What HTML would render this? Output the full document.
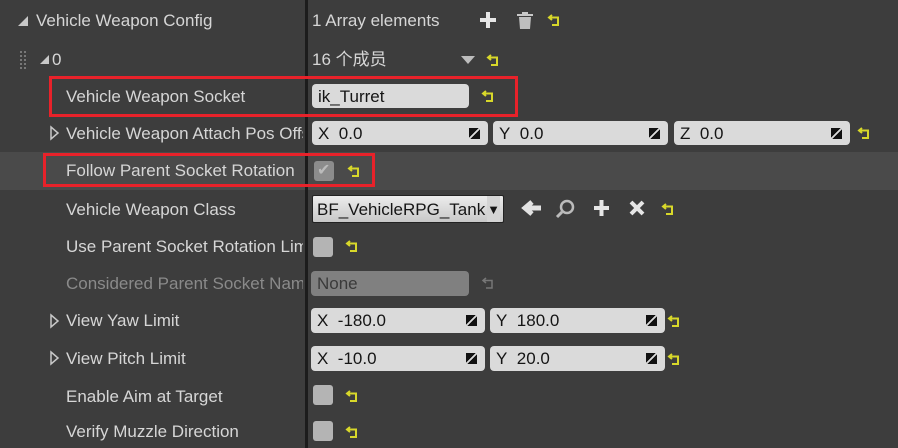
<!DOCTYPE html><html><head><style>
body{margin:0;width:898px;height:448px;background:#3d3d3d;font-family:"Liberation Sans","Noto Sans CJK SC",sans-serif;font-size:17px;color:#d6d6d6;position:relative;overflow:hidden}
.a{position:absolute;white-space:nowrap}
.t{line-height:20px}
.f{position:absolute;background:#dadada;border-radius:4px;color:#151515;line-height:25px;height:24px;box-sizing:border-box;padding-left:6px}
.cb{position:absolute;width:20px;height:20px;background:#b4b4b4;border-radius:3px}
.sp{position:absolute;right:8px;top:7px;width:11px;height:11px;background:linear-gradient(135deg,#111 0 45%,transparent 45% 55%,#111 55%)}
.box{position:absolute;border:3px solid #e8222a;box-sizing:border-box}
</style></head><body>
<div class="a" style="left:0;top:152px;width:898px;height:38px;background:#4a4a4a"></div>
<div class="a" style="left:305px;top:0;width:3px;height:448px;background:#1c1c1c"></div>
<svg class="a" style="left:0;top:0" width="898" height="448">
<defs><g id="rs"><path d="M4 1 L1 3.5 L4 6 M1 3.5 H10 V11 H4" fill="none" stroke="#d8d82a" stroke-width="2"/></g></defs>
<polygon points="18,26 28,16 28,26" fill="#c8c8c8"/>
<polygon points="40,64 49,55 49,64" fill="#c8c8c8"/>
<g fill="#777"><rect x="20" y="51" width="2" height="2"/><rect x="24" y="51" width="2" height="2"/><rect x="20" y="55" width="2" height="2"/><rect x="24" y="55" width="2" height="2"/><rect x="20" y="59" width="2" height="2"/><rect x="24" y="59" width="2" height="2"/><rect x="20" y="63" width="2" height="2"/><rect x="24" y="63" width="2" height="2"/><rect x="20" y="67" width="2" height="2"/><rect x="24" y="67" width="2" height="2"/></g>
<polygon points="51,127 58,133 51,139" fill="none" stroke="#c8c8c8" stroke-width="1.5"/>
<polygon points="51,315 58,321 51,327" fill="none" stroke="#c8c8c8" stroke-width="1.5"/>
<polygon points="51,352 58,358 51,364" fill="none" stroke="#c8c8c8" stroke-width="1.5"/>
<path d="M480 20 H496 M488 12 V28" stroke="#e6e6e6" stroke-width="4"/>
<path d="M517 15 H533 M522 13 H528" stroke="#c8c8c8" stroke-width="2"/><path d="M519 17 H531 L530 29 H520 Z" fill="#bfbfbf"/>
<polygon points="461,56 475,56 468,64" fill="#bdbdbd"/>
<path d="M541 208 L526 208 M532 202 L525 208 L532 214" stroke="#e2e2e2" stroke-width="5" fill="none"/>
<circle cx="567" cy="207" r="6" fill="none" stroke="#bbb" stroke-width="2.5"/><path d="M562 212 L557 217" stroke="#bbb" stroke-width="3"/>
<path d="M594 208 H609 M601.5 200 V216" stroke="#e6e6e6" stroke-width="4"/>
<path d="M631 202 L643 214 M643 202 L631 214" stroke="#e6e6e6" stroke-width="4"/>
<use href="#rs" x="548" y="14"/><use href="#rs" x="487" y="54"/><use href="#rs" x="482" y="90"/><use href="#rs" x="858" y="127"/><use href="#rs" x="348" y="165"/><use href="#rs" x="662" y="203"/><use href="#rs" x="346" y="240"/><use href="#rs" x="668" y="315"/><use href="#rs" x="668" y="353"/><use href="#rs" x="346" y="390"/><use href="#rs" x="346" y="426"/>
<g transform="translate(482,277)"><path d="M4 1 L1 3.5 L4 6 M1 3.5 H10 V11 H4" fill="none" stroke="#777" stroke-width="1.5"/></g>
</svg>
<div class="a t" style="left:36px;top:11px">Vehicle Weapon Config</div>
<div class="a t" style="left:312px;top:11px">1 Array elements</div>
<div class="a t" style="left:52px;top:50px">0</div>
<div class="a t" style="left:312px;top:50px">16 个成员</div>
<div class="a t" style="left:66px;top:87px">Vehicle Weapon Socket</div>
<div class="a t" style="left:66px;top:124px;width:237px;overflow:hidden">Vehicle Weapon Attach Pos Offset</div>
<div class="a t" style="left:66px;top:161px">Follow Parent Socket Rotation</div>
<div class="a t" style="left:66px;top:200px">Vehicle Weapon Class</div>
<div class="a t" style="left:66px;top:237px;width:237px;overflow:hidden">Use Parent Socket Rotation Limit</div>
<div class="a t" style="left:66px;top:274px;width:237px;overflow:hidden;color:#8a8a8a">Considered Parent Socket Name</div>
<div class="a t" style="left:66px;top:311px">View Yaw Limit</div>
<div class="a t" style="left:66px;top:349px">View Pitch Limit</div>
<div class="a t" style="left:66px;top:387px">Enable Aim at Target</div>
<div class="a t" style="left:66px;top:422px">Verify Muzzle Direction</div>
<div class="f" style="left:312px;top:84px;width:157px">ik_Turret</div>
<div class="f" style="left:312px;top:121px;width:176px">X&nbsp; 0.0<i class="sp"></i></div>
<div class="f" style="left:493px;top:121px;width:175px">Y&nbsp; 0.0<i class="sp"></i></div>
<div class="f" style="left:674px;top:121px;width:176px">Z&nbsp; 0.0<i class="sp"></i></div>
<div class="cb" style="left:314px;top:161px;background:#8c8c8c"></div><div class="a" style="left:317px;top:160px;color:#bbb;font-size:16px">✔</div>
<div class="f" style="left:312px;top:195px;width:192px;height:28px;line-height:27px;border:1px solid #222;border-radius:2px;background:linear-gradient(#ececec,#c8c8c8);padding-left:4px;overflow:hidden">BF_VehicleRPG_Tank<span style="position:absolute;right:3px;top:0;font-size:13px;background:#d4d4d4">▼</span></div>
<div class="cb" style="left:313px;top:237px"></div>
<div class="f" style="left:311px;top:271px;width:158px;height:25px;background:#808080;color:#3a3a3a">None</div>
<div class="f" style="left:311px;top:308px;width:174px;height:25px">X&nbsp; -180.0<i class="sp"></i></div>
<div class="f" style="left:490px;top:308px;width:175px;height:25px">Y&nbsp; 180.0<i class="sp"></i></div>
<div class="f" style="left:311px;top:346px;width:174px;height:25px">X&nbsp; -10.0<i class="sp"></i></div>
<div class="f" style="left:490px;top:346px;width:175px;height:25px">Y&nbsp; 20.0<i class="sp"></i></div>
<div class="cb" style="left:313px;top:385px"></div>
<div class="cb" style="left:313px;top:421px"></div>
<div class="box" style="left:49px;top:76px;width:469px;height:41px"></div>
<div class="box" style="left:43px;top:153px;width:332px;height:34px"></div>
</body></html>
